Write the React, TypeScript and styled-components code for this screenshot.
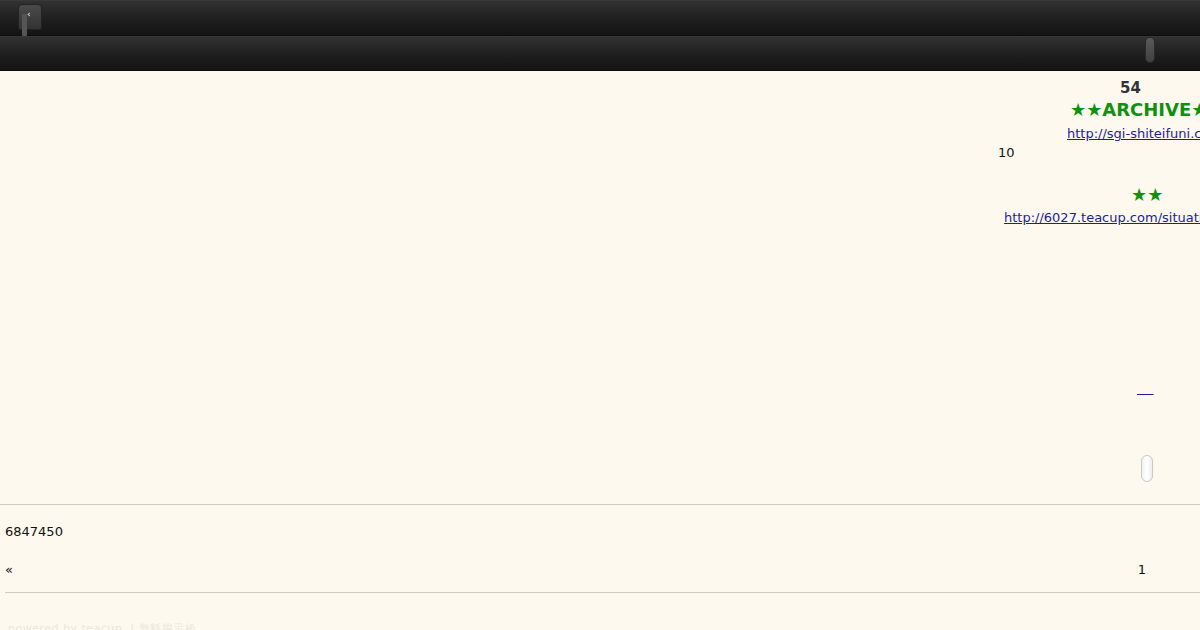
import styled, { createGlobalStyle } from "styled-components";

const GlobalStyle = createGlobalStyle`
  html, body {
    margin: 0;
    padding: 0;
    background: #fdf9ef;
    overflow: hidden;
  }
  body {
    font-family: "DejaVu Sans", "Liberation Sans", sans-serif;
    font-size: 13px;
    color: #111;
  }
`;

const Page = styled.div`
  width: 1200px;
  height: 630px;
  display: flex;
  flex-direction: column;
  overflow: hidden;

  & > * {
    flex-shrink: 0;
  }
`;

const Bar = styled.div<{ $h: number }>`
  height: ${(p) => p.$h}px;
  background: linear-gradient(#323232, #1e1e1e 55%, #141414);
  border-top: 1px solid #383838;
  border-bottom: 1px solid #0c0c0c;
  box-sizing: border-box;
  display: flex;
  align-items: flex-start;
  padding: 0 18px;
`;

const BackTab = styled.div`
  width: 24px;
  margin-top: 3px;
  height: 26px;
  border-radius: 4px 4px 2px 2px;
  background: linear-gradient(#4a4a4a, #333);
  border: 1px solid #222;
  box-sizing: border-box;
  position: relative;
`;

const TabStem = styled.span`
  position: absolute;
  left: 3px;
  top: 9px;
  width: 5px;
  height: 22px;
  background: #555;
  border-radius: 1px;
`;

const TabMark = styled.span`
  position: absolute;
  left: 8px;
  top: 4px;
  color: #f2f2f2;
  font-size: 9px;
  line-height: 10px;
`;

const BarPill = styled.div`
  margin-left: auto;
  margin-right: 27px;
  margin-top: 0;
  width: 10px;
  height: 26px;
  border-radius: 5px;
  background: linear-gradient(#5a5a5a, #404040);
  border: 1px solid #2a2a2a;
  box-sizing: border-box;
`;

const Main = styled.div`
  height: 433px;
  border-bottom: 1px solid #cfcac2;
  display: flex;
  justify-content: flex-end;
`;

const Side = styled.div`
  width: 202px;
  padding-top: 7px;
  white-space: nowrap;
  overflow: hidden;
  display: flex;
  flex-direction: column;
`;

const Line = styled.div<{ $indent: number; $h: number; $gap?: number }>`
  padding-left: ${(p) => p.$indent}px;
  margin-top: ${(p) => p.$gap ?? 0}px;
  height: ${(p) => p.$h}px;
  line-height: ${(p) => p.$h}px;
`;

const Count = styled.span`
  font-weight: bold;
  font-size: 15px;
  color: #333;
`;

const Green = styled.span`
  color: #109010;
  font-weight: bold;
  font-size: 18px;
`;

const A = styled.a`
  color: #1c1ca0;
  text-decoration: underline;
  font-size: 13px;
`;

const Plain = styled.span`
  font-size: 13px;
  color: #111;
`;

const Knob = styled.div`
  margin-left: 143px;
  margin-top: 55px;
  width: 12px;
  height: 27px;
  border-radius: 6px;
  background: linear-gradient(90deg, #f2f2f2, #fff 50%, #eee);
  border: 1px solid #c8c8c8;
  box-sizing: border-box;
`;

const Footer = styled.div`
  display: flex;
  flex-direction: column;
`;

const Serial = styled.div`
  box-sizing: border-box;
  padding: 19px 5px 0;
  height: 57px;
  line-height: 15px;
`;

const Pager = styled.div`
  box-sizing: border-box;
  margin-left: 5px;
  height: 31px;
  border-bottom: 1px solid #cfcac2;
  display: flex;
  justify-content: space-between;
  align-items: flex-start;
  padding-right: 54px;
  line-height: 15px;
`;

const Faint = styled.div`
  padding: 28px 8px 0;
  color: #ece7db;
  font-size: 11px;
  letter-spacing: 0.5px;
`;

export default function App() {
  return (
    <Page>
      <GlobalStyle />
      <Bar $h={36}>
        <BackTab>
          <TabStem />
          <TabMark>‹</TabMark>
        </BackTab>
      </Bar>
      <Bar $h={35}>
        <BarPill />
      </Bar>
      <Main>
        <Side>
          <Line $indent={122} $h={20}>
            <Count>54</Count>
          </Line>
          <Line $indent={72} $h={24}>
            <Green>★★ARCHIVE★★</Green>
          </Line>
          <Line $indent={69} $h={24}>
            <A href="#">http://sgi-shiteifuni.com/</A>
          </Line>
          <Line $indent={0} $h={14}>
            <Plain>10</Plain>
          </Line>
          <Line $indent={133} $h={24} $gap={23}>
            <Green>★★</Green>
          </Line>
          <Line $indent={6} $h={22}>
            <A href="#">http://6027.teacup.com/situation/bbs</A>
          </Line>
          <Line $indent={139} $h={22} $gap={149}>
            <A href="#">{"\u00a0\u00a0\u00a0\u00a0"}</A>
          </Line>
          <Knob />
        </Side>
      </Main>
      <Footer>
        <Serial>6847450</Serial>
        <Pager>
          <span>«</span>
          <span>1</span>
        </Pager>
        <Faint>powered by teacup. | 無料掲示板</Faint>
      </Footer>
    </Page>
  );
}
